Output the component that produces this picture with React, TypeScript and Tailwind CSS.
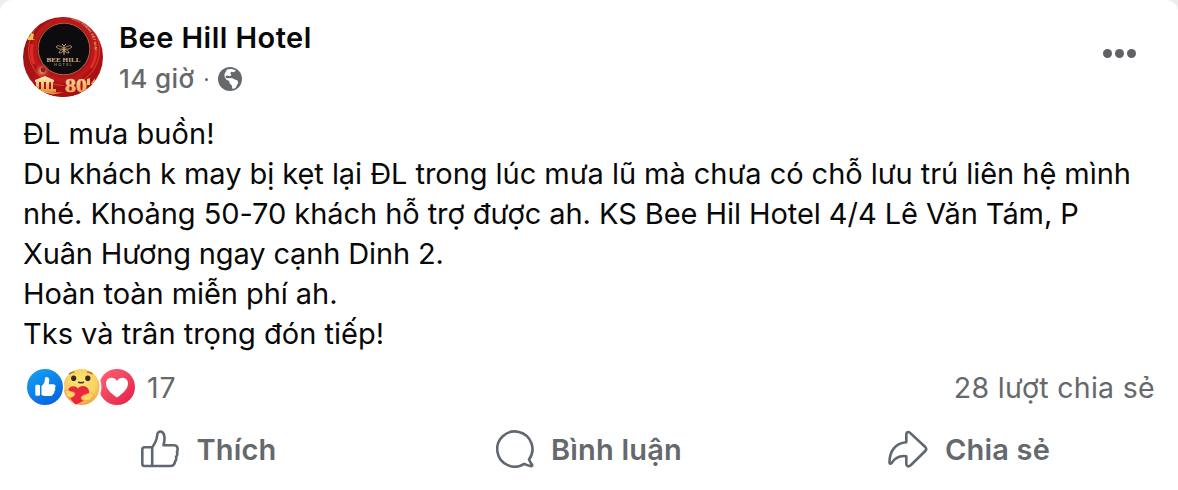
const POST_LINES = [
  { text: 'ĐL mưa buồn!', spacing: 'tracking-[0.04px]' },
  { text: 'Du khách k may bị kẹt lại ĐL trong lúc mưa lũ mà chưa có chỗ lưu trú liên hệ mình', spacing: 'tracking-[-0.05px]' },
  { text: 'nhé. Khoảng 50-70 khách hỗ trợ được ah. KS Bee Hil Hotel 4/4 Lê Văn Tám, P', spacing: 'tracking-[-0.06px]' },
  { text: 'Xuân Hương ngay cạnh Dinh 2.', spacing: 'tracking-[-0.14px]' },
  { text: 'Hoàn toàn miễn phí ah.', spacing: 'tracking-[-0.06px]' },
  { text: 'Tks và trân trọng đón tiếp!', spacing: 'tracking-normal' },
];

const ACTIONS = [
  { label: 'Thích', icon: LikeIcon },
  { label: 'Bình luận', icon: CommentIcon },
  { label: 'Chia sẻ', icon: ShareIcon },
];

function Avatar() {
  return (
    <svg viewBox="0 0 80 80" className="w-20 h-20 shrink-0">
      <defs>
        <clipPath id="avatar-clip">
          <circle cx="40" cy="40" r="40" />
        </clipPath>
        <linearGradient id="avatar-red" x1="0" y1="0" x2="1" y2="1">
          <stop offset="0" stopColor="#8e0f12" />
          <stop offset="0.5" stopColor="#b01518" />
          <stop offset="1" stopColor="#a80d10" />
        </linearGradient>
        <radialGradient id="avatar-glow">
          <stop offset="0" stopColor="#f7c79a" />
          <stop offset="0.4" stopColor="#d9704a" stopOpacity="0.8" />
          <stop offset="1" stopColor="#c0171a" stopOpacity="0" />
        </radialGradient>
        <linearGradient id="avatar-gold" x1="0" y1="0" x2="0" y2="1">
          <stop offset="0" stopColor="#fff1c0" />
          <stop offset="1" stopColor="#e3953d" />
        </linearGradient>
        <path id="avatar-arc" d="M10.500 32A30.500 30.500 0 0 1 71.500 32A30.500 30.500 0 0 1 70 41" />
      </defs>
      <g clipPath="url(#avatar-clip)">
        <rect width="80" height="80" fill="url(#avatar-red)" />
        <circle cx="41" cy="33" r="35.500" fill="none" stroke="#e1432f" strokeWidth="1" />
        <circle cx="41" cy="33" r="30" fill="none" stroke="#b8191b" strokeWidth="5" />
        <path d="M68 51q5-8 5-18M11 47Q7 38 9 27" fill="none" stroke="#e02a24" strokeWidth="3" />
        <text fontSize="3.400" fontWeight="700" fill="#e8a27c" fontFamily="Inter, sans-serif">
          <textPath href="#avatar-arc" startOffset="55">QUỐC KHÁNH VIỆT NAM</textPath>
        </text>
        <circle cx="41" cy="32" r="25.800" fill="#0d0b0d" stroke="#c98a4e" strokeWidth="0.700" />
        <path d="M5 20l2-1 1-3 3 1-1 5 2 1H5z" fill="#f2c34a" />
        <circle cx="19" cy="54" r="8" fill="url(#avatar-glow)" />
        <circle cx="20" cy="53" r="2.400" fill="#7e2620" />
        <path d="M0 61q10 7 22 9t24-3l34-1v14H0z" fill="#a90e10" />
        <path d="M12 63l10-4 9 4v2H12zM13 65h3v7h-3zM18 65h3v7h-3zM23 65h3v7h-3zM28 65h2v7h-2zM10 72h23v3H10z" fill="url(#avatar-gold)" />
        <path d="M5 66q15 12 36 9-18 7-36-9" fill="#e9a14a" />
        <text x="42" y="74.500" fontSize="19" fontWeight="700" fill="url(#avatar-gold)" stroke="#f4bf78" strokeWidth="0.500" textLength="22" lengthAdjust="spacingAndGlyphs" fontFamily="Liberation Serif, serif">80</text>
        <path d="M64 62l3-1v7h-3zM68 67l4-6-1 7zM73 62l4-1-1 3h-2v3z" fill="#f0bf7c" />
        <g fill="none" stroke="#c8a477" strokeWidth="0.800">
          <path d="M41 31q-7-4-8-1 2 3 8 2-5 1-5 4 2 1 5-3M41 31q7-4 8-1-2 3-8 2 5 1 5 4-2 1-5-3" />
          <path d="M39 27l2 2 2-2M41 29v9M39.800 33h2.400M39.800 35h2.400" strokeWidth="1" />
        </g>
        <text x="23.500" y="44.500" fontSize="7" fontWeight="700" fill="#d4b78e" textLength="34" lengthAdjust="spacingAndGlyphs" fontFamily="Liberation Serif, serif">BEE HILL</text>
        <text x="31" y="49.200" fontSize="4" fill="#c5b8a5" textLength="18" fontFamily="Inter, sans-serif">HOTEL</text>
      </g>
    </svg>
  );
}

function GlobeIcon() {
  return (
    <svg viewBox="0 0 24 24" className="w-6 h-6">
      <circle cx="12" cy="12" r="12" fill="#65686c" />
      <path
        d="M9 2.500C12 1.500 15.500 1.900 18 3.600l-2.200 1.600-2.600-.4-.9 1.700 1.200 1.500-1.600 1.300-2.300-.8-2 .6.300 1.900 2.800.3 3.200-.3 3 1.500 2.600 1 .8 2.200-1.300 2.400-1.300 2.700c-1 .9-2.600 1.300-3.400.9l-.5-3.300-2.200-2.100-.5-2.200-2.600-1.300-1.800-2.500-.3-2.800 1.200-2.500z"
        fill="#fff"
      />
    </svg>
  );
}

function Reactions() {
  return (
    <svg viewBox="0 0 108 36" className="w-[108px] h-9">
      <defs>
        <linearGradient id="like-blue" x1="0" y1="0" x2="0.6" y2="1">
          <stop offset="0" stopColor="#15a5f7" />
          <stop offset="1" stopColor="#0866e0" />
        </linearGradient>
        <radialGradient id="care-yellow" cx="0.5" cy="0.4" r="0.6">
          <stop offset="0" stopColor="#ffe878" />
          <stop offset="0.7" stopColor="#fbd05f" />
          <stop offset="1" stopColor="#ee9f45" />
        </radialGradient>
        <linearGradient id="love-red" x1="0" y1="0" x2="1" y2="1">
          <stop offset="0" stopColor="#ff6575" />
          <stop offset="1" stopColor="#e51c45" />
        </linearGradient>
      </defs>
      <circle cx="90" cy="18" r="18" fill="url(#love-red)" />
      <path d="M90 28.500C84 24.200 79 20 79 14.500c0-6 7.700-7.900 11-2.400 3.300-5.500 11-3.600 11 2.400 0 5.500-5 9.700-11 14z" fill="#fff" />
      <circle cx="54.500" cy="18" r="20" fill="#fff" />
      <circle cx="54.500" cy="18" r="18" fill="url(#care-yellow)" />
      <ellipse cx="46.700" cy="9.200" rx="2.600" ry="2.800" fill="#342923" />
      <ellipse cx="60.800" cy="9.200" rx="2.600" ry="2.800" fill="#342923" />
      <path d="M42.500 4.800q2-2 4.500-1.700M60.500 3.100q2.500-.2 4.500 1.700" fill="none" stroke="#ad6524" strokeWidth="1.300" strokeLinecap="round" />
      <path d="M51.500 13.200q2.500 1 5 0" fill="none" stroke="#5b3322" strokeWidth="1.500" strokeLinecap="round" />
      <path d="M48.500 35.500C44 30.500 40.500 27 41 21.500c1-4.800 7-5.800 10-2 3-4 10-3 11 2.500 1 6-6 11-13.500 13.500z" fill="#e9283f" />
      <path d="M38 21.500q3.500-1.500 5.500 1l3.500.8q2 1.700 0 3.700-3 3-7 .8z" fill="#ffd566" stroke="#e99c45" strokeWidth="0.700" />
      <path d="M67 25.500q-3.500-3-7-.5l-4.500 1.700q-2.300 1.800-.7 3.800 3.700 2.200 8.700.5z" fill="#ffd566" stroke="#e99c45" strokeWidth="0.700" />
      <circle cx="18" cy="18" r="19.500" fill="#fff" />
      <circle cx="18" cy="18" r="18" fill="url(#like-blue)" />
      <rect x="8.300" y="15.700" width="4.700" height="11" rx="1.300" fill="#fff" />
      <path d="M14.500 17c2.500-2 3.400-4.500 3.500-7.500 0-2.100 4.300-2.200 4.300 1.800 0 1.500-.4 2.700-.7 3.900h4.200c2.900 0 3.600 2.500 1.900 3.900 1 1.200.8 2.600-.5 3.500.3 1.300-.2 2.200-1.300 2.700-.1 1.100-1 1.700-2.300 1.700h-4.800c-1.700 0-2.700-.4-4.300-1.100z" fill="#fff" />
    </svg>
  );
}

function LikeIcon() {
  return (
    <svg viewBox="0 0 38 38" className="w-[38px] h-[38px]" fill="none" stroke="#606770" strokeWidth="2.6" strokeLinejoin="round">
      <path d="M11.200 17.200H3.500q-2.200 0-2.200 2.200v14.400q0 2.200 2.200 2.200h26c2.800 0 4.200-1.300 4.500-4.300 1.300-1.500 1.500-3 1-4.700 1.300-1.500 1.600-3.200 1-5 1.500-3.500.2-6.800-3-6.800h-10.500c.8-3 1.300-6.500.8-9.200-.8-5.700-6.600-5.700-7-1.500-.4 6-2.200 9-5.100 12.700z" />
      <path d="M11.200 17.200V36" />
    </svg>
  );
}

function CommentIcon() {
  return (
    <svg viewBox="0 0 38 38" className="w-[38px] h-[38px]" fill="none" stroke="#606770" strokeWidth="2.6" strokeLinejoin="round">
      <path d="M33 29.500A17.600 17.600 0 1 0 28.300 33.900q3.500 1.900 7 2.200 1.400-.1.700-1.500-1.700-2.100-3-5.100z" />
    </svg>
  );
}

function ShareIcon() {
  return (
    <svg viewBox="0 0 40 38" className="w-10 h-[38px]" fill="none" stroke="#606770" strokeWidth="2.6" strokeLinejoin="round">
      <path d="M18.300 12.300V4.200q.5-3.200 3.500-1.600L37.300 17q1.800 2 0 4L22.700 35.300q-3.500 2.500-4.400-1v-8.100C11 25.200 7 27.500 3.500 33.200q-2 1.500-2-1C1.500 21.500 7 13.300 18.300 12.300z" />
    </svg>
  );
}

export default function App() {
  return (
    <div className="w-[1178px] h-[490px] bg-[#ededed] overflow-hidden font-['Inter',sans-serif]">
      <article className="h-full bg-white rounded-t-xl pt-[17px]">
        <header className="flex h-20 pl-[23px] pr-[42px]">
          <Avatar />
          <div className="ml-4 flex-1 whitespace-nowrap">
            <h2 className="pt-px text-[29px] leading-[40px] font-semibold text-[#080809] tracking-[0.45px]">Bee Hill Hotel</h2>
            <div className="flex items-center h-[42px] text-[#65686c]">
              <span className="pb-0.5 text-[26px] font-medium tracking-[0.4px]">14 giờ</span>
              <span className="w-[3px] h-[3px] rounded-full bg-[#65686c] ml-[10px] mr-[10px]" />
              <GlobeIcon />
            </div>
          </div>
          <div className="flex gap-[3px] pt-8 h-fit">
            <span className="w-[9px] h-[9px] rounded-full bg-[#606266]" />
            <span className="w-[9px] h-[9px] rounded-full bg-[#606266]" />
            <span className="w-[9px] h-[9px] rounded-full bg-[#606266]" />
          </div>
        </header>

        <div className="mt-[17px] pl-[23px] text-[29px] leading-[40px] text-[#080809] whitespace-nowrap">
          {POST_LINES.map((line) => (
            <p key={line.text} className={line.spacing}>
              {line.text}
            </p>
          ))}
        </div>

        <div className="mt-[15px] h-9 pl-[27px] pr-[23px] flex items-center text-[28.5px] text-[#65686c]">
          <Reactions />
          <span className="ml-3 pt-0.5 tracking-[1px]">17</span>
          <span className="ml-auto pt-0.5 tracking-[0.3px]">28 lượt chia sẻ</span>
        </div>

        <div className="mt-5 mx-[19px] h-12 grid grid-cols-3">
          {ACTIONS.map(({ label, icon: Icon }) => (
            <button key={label} className="flex items-center justify-center gap-[17px] text-[29px] font-semibold text-[#65686c]">
              <Icon />
              <span className="pt-px tracking-[0.2px]">{label}</span>
            </button>
          ))}
        </div>
      </article>
    </div>
  );
}
